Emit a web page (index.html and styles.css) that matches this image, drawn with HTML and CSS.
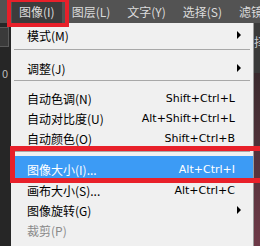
FILE: index.html
```html
<!DOCTYPE html>
<html lang="zh-CN">
<head>
    <meta charset="UTF-8">
    <meta name="viewport" content="width=device-width, initial-scale=1.0">
    <title>图像菜单</title>
    <link rel="stylesheet" href="styles.css">
</head>
<body>
    <div class="menubar">
        <div class="bar-item active">图像(I)</div>
        <div class="bar-item">图层(L)</div>
        <div class="bar-item">文字(Y)</div>
        <div class="bar-item">选择(S)</div>
        <div class="bar-item">滤镜</div>
    </div>

    <div class="workspace">
        <div class="left-strip">
            <div class="tool-box"></div>
            <div class="tool-text">0</div>
        </div>

        <div class="menu">
            <div class="item">
                <span class="label">模式(M)</span>
                <span class="arrow"></span>
            </div>
            <div class="sep"></div>
            <div class="item">
                <span class="label">调整(J)</span>
                <span class="arrow"></span>
            </div>
            <div class="sep sep-2"></div>
            <div class="item">
                <span class="label">自动色调(N)</span>
                <span class="keys">Shift+Ctrl+L</span>
            </div>
            <div class="item">
                <span class="label">自动对比度(U)</span>
                <span class="keys">Alt+Shift+Ctrl+L</span>
            </div>
            <div class="item">
                <span class="label">自动颜色(O)</span>
                <span class="keys">Shift+Ctrl+B</span>
            </div>
            <div class="sep sep-3"></div>
            <div class="item selected">
                <span class="label">图像大小(I)...</span>
                <span class="keys">Alt+Ctrl+I</span>
            </div>
            <div class="item">
                <span class="label">画布大小(S)...</span>
                <span class="keys">Alt+Ctrl+C</span>
            </div>
            <div class="item">
                <span class="label">图像旋转(G)</span>
                <span class="arrow"></span>
            </div>
            <div class="item disabled">
                <span class="label">裁剪(P)</span>
            </div>
        </div>

        <div class="right-strip">
            <div class="right-text">择</div>
            <div class="right-photo"></div>
        </div>
    </div>

    <!-- red marks drawn over the screenshot -->
    <div class="mark mark-bar"></div>
    <div class="mark mark-item"></div>
</body>
</html>
```

FILE: styles.css
```css
* {
    box-sizing: border-box;
}

body, html {
    margin: 0;
    padding: 0;
}

body {
    width: 260px;
    height: 246px;
    overflow: hidden;
    position: relative;
    background-color: #282828;
    font-family: "Noto Sans CJK SC", "Noto Sans", sans-serif;
    font-size: 12px;
}

.menubar {
    height: 23px;
    display: flex;
    align-items: center;
    padding-left: 12px;
    background-color: #535353;
    color: #dcdcdc;
}

.bar-item {
    height: 23px;
    line-height: 23px;
    padding: 0 7px;
    margin-right: 3px;
    white-space: nowrap;
}

.bar-item.active {
    background-color: #3c3c3c;
}

.workspace {
    display: flex;
    height: 223px;
}

.left-strip {
    width: 11px;
    background-color: #262626;
    padding-top: 4px;
    overflow: hidden;
}

.tool-box {
    width: 9px;
    height: 20px;
    border: 1px solid #5a5a5a;
    border-left: none;
    background-color: #3a3a3a;
}

.tool-text {
    margin-top: 18px;
    color: #bbbbbb;
    font-size: 11px;
    text-indent: 2px;
}

.menu {
    width: 243px;
    padding-top: 2px;
    background-color: #f0f0f0;
    border-right: 1px solid #9a9a9a;
    color: #000;
}

.item {
    height: 20px;
    display: flex;
    align-items: center;
    padding: 0 18px 0 16px;
}

.item .label {
    flex: 1;
    white-space: nowrap;
}

.keys {
    font-family: "DejaVu Sans", sans-serif;
    font-size: 11px;
    white-space: nowrap;
}

.arrow {
    width: 0;
    height: 0;
    margin-right: -6px;
    border-top: 4px solid transparent;
    border-bottom: 4px solid transparent;
    border-left: 4px solid #000;
}

.item.selected {
    height: 24px;
    padding-top: 2px;
    background-color: #3c9bf5;
    color: #ffffff;
}

.item.disabled {
    color: #8a8a8a;
}

.sep {
    height: 1px;
    margin: 4px 3px 8px 3px;
    background-color: #a8a8a8;
}

.sep-2 {
    margin-top: 2px;
    margin-bottom: 7px;
}

.sep-3 {
    margin-top: 3px;
    margin-bottom: 4px;
}

.right-strip {
    flex: 1;
    display: flex;
    flex-direction: column;
    background-color: #3a3a3a;
    overflow: hidden;
}

.right-text {
    margin-top: 10px;
    color: #cccccc;
    font-size: 12px;
    height: 40px;
}

.right-photo {
    flex: 1;
    background: linear-gradient(#3a2a2e, #6e3a48);
}

.mark {
    position: absolute;
    border: 5px solid #e8202a;
}

.mark-bar {
    left: 7px;
    top: -2px;
    width: 62px;
    height: 29px;
    border-width: 4px;
}

.mark-item {
    left: 10px;
    top: 146px;
    width: 260px;
    height: 37px;
}
```
